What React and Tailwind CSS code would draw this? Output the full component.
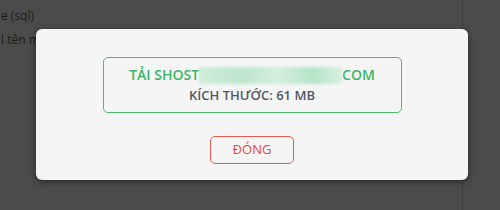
import React from "react";

const DownloadModal = () => {
  return (
    <div className="absolute left-[36px] top-[29px] w-[432px] h-[151px] bg-[#f5f5f5] rounded-[6px] shadow-[0_2px_6px_rgba(0,0,0,0.45)] flex flex-col items-center">
      <div className="mt-[28px] w-[299px] h-[56px] border-[1.5px] border-[#4cbb6f] rounded-[5px] flex flex-col items-center justify-center gap-[1px]">
        <p className="text-[14px] leading-[20px] font-semibold text-[#3db565] flex items-center">
          <span className="shrink-0">TẢI SHOST</span>
          {/* redacted part of the link */}
          <span className="shrink-0 w-[143px] h-[17px] bg-[linear-gradient(90deg,#cfeeda,#bde6cb_30%,#d4efde_55%,#b6e3c6_80%,#d8f1e1)] blur-[1.5px]" />
          <span className="shrink-0">COM</span>
        </p>
        <p className="text-[13px] leading-[19px] font-semibold text-[#4f5966]">
          KÍCH THƯỚC: 61 MB
        </p>
      </div>
      <button className="mt-[23px] w-[84px] h-[28px] border border-[#ea5a4c] rounded-[5px] text-[13px] font-medium text-[#e5493b] bg-transparent">
        ĐÓNG
      </button>
    </div>
  );
};

export default function App() {
  return (
    <div
      className="relative w-[500px] h-[210px] overflow-hidden bg-[#4b4b4b]"
      style={{ fontFamily: '"Open Sans", "Noto Sans", sans-serif' }}
    >
      <div className="flex h-full">
        <div className="w-[463px] border-r border-[#3d3d3d] text-[12px] text-[#1c1c1c] pl-[1px]">
          <p className="mt-[6px] leading-[20px] whitespace-nowrap">e (sql)</p>
          <p className="mt-[4px] leading-[20px] whitespace-nowrap">l tên mục</p>
        </div>
        <div className="flex-1" />
      </div>
      <DownloadModal />
    </div>
  );
}
